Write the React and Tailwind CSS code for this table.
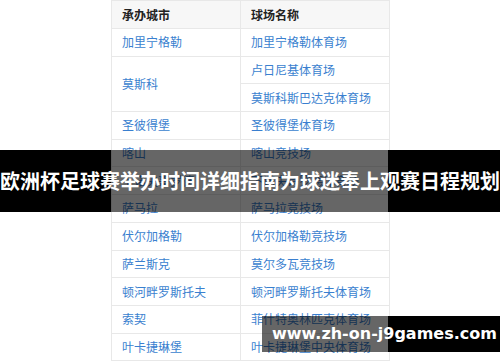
const ROWS = [
  { city: "加里宁格勒", venues: ["加里宁格勒体育场"] },
  { city: "莫斯科", venues: ["卢日尼基体育场", "莫斯科斯巴达克体育场"] },
  { city: "圣彼得堡", venues: ["圣彼得堡体育场"] },
  { city: "喀山", venues: ["喀山竞技场"] },
  { city: "下诺夫哥罗德", venues: ["下诺夫哥罗德体育场"] },
  { city: "萨马拉", venues: ["萨马拉竞技场"] },
  { city: "伏尔加格勒", venues: ["伏尔加格勒竞技场"] },
  { city: "萨兰斯克", venues: ["莫尔多瓦竞技场"] },
  { city: "顿河畔罗斯托夫", venues: ["顿河畔罗斯托夫体育场"] },
  { city: "索契", venues: ["菲什特奥林匹克体育场"] },
  { city: "叶卡捷琳堡", venues: ["叶卡捷琳堡中央体育场"] },
];

const cell = "border border-[#e8e8e8] px-[10px] text-left align-middle";

export default function App() {
  return (
    <div
      className="relative w-[500px] h-[362px] overflow-hidden bg-white"
      style={{ fontFamily: '"Noto Sans CJK SC", "Noto Sans", sans-serif' }}
    >
      {/* 球场表格 */}
      <table className="ml-[111px] w-[278px] table-fixed border-collapse text-[12px] leading-none">
        <colgroup>
          <col className="w-[129px]" />
          <col className="w-[149px]" />
        </colgroup>
        <thead>
          <tr className="h-[28px] bg-[#f7f7f7]">
            <th className={`${cell} font-bold text-[#222]`}>承办城市</th>
            <th className={`${cell} font-bold text-[#222]`}>球场名称</th>
          </tr>
        </thead>
        <tbody>
          {ROWS.map((row) =>
            row.venues.map((venue, i) => (
              <tr key={venue} className="h-[27.7px]">
                {i === 0 && (
                  <td rowSpan={row.venues.length} className={`${cell} text-[#3a7fcf]`}>
                    {row.city}
                  </td>
                )}
                <td className={`${cell} text-[#3a7fcf]`}>{venue}</td>
              </tr>
            ))
          )}
        </tbody>
      </table>

      {/* 标题横幅 */}
      <div className="absolute left-0 top-[150px] flex h-[62px] w-[500px]">
        <div className="w-[111px] bg-black" />
        <div className="w-[277px] bg-black/60" />
        <div className="flex-1 bg-black" />
      </div>
      <div className="absolute left-0 top-[150px] flex h-[62px] w-[500px] items-center justify-center whitespace-nowrap text-[20px] font-bold text-white">
        欧洲杯足球赛举办时间详细指南为球迷奉上观赛日程规划
      </div>

      {/* 网址水印 */}
      <div className="absolute left-[262px] top-[316px] flex h-[36px] w-[238px]">
        <div className="w-[126px] bg-black/60" />
        <div className="flex-1 bg-black" />
      </div>
      <div
        className="absolute left-[272px] top-[316px] flex h-[36px] items-center whitespace-nowrap text-[16px] font-bold text-white"
        style={{ fontFamily: '"DejaVu Sans", sans-serif' }}
      >
        www.zh-on-j9games.com
      </div>
    </div>
  );
}
